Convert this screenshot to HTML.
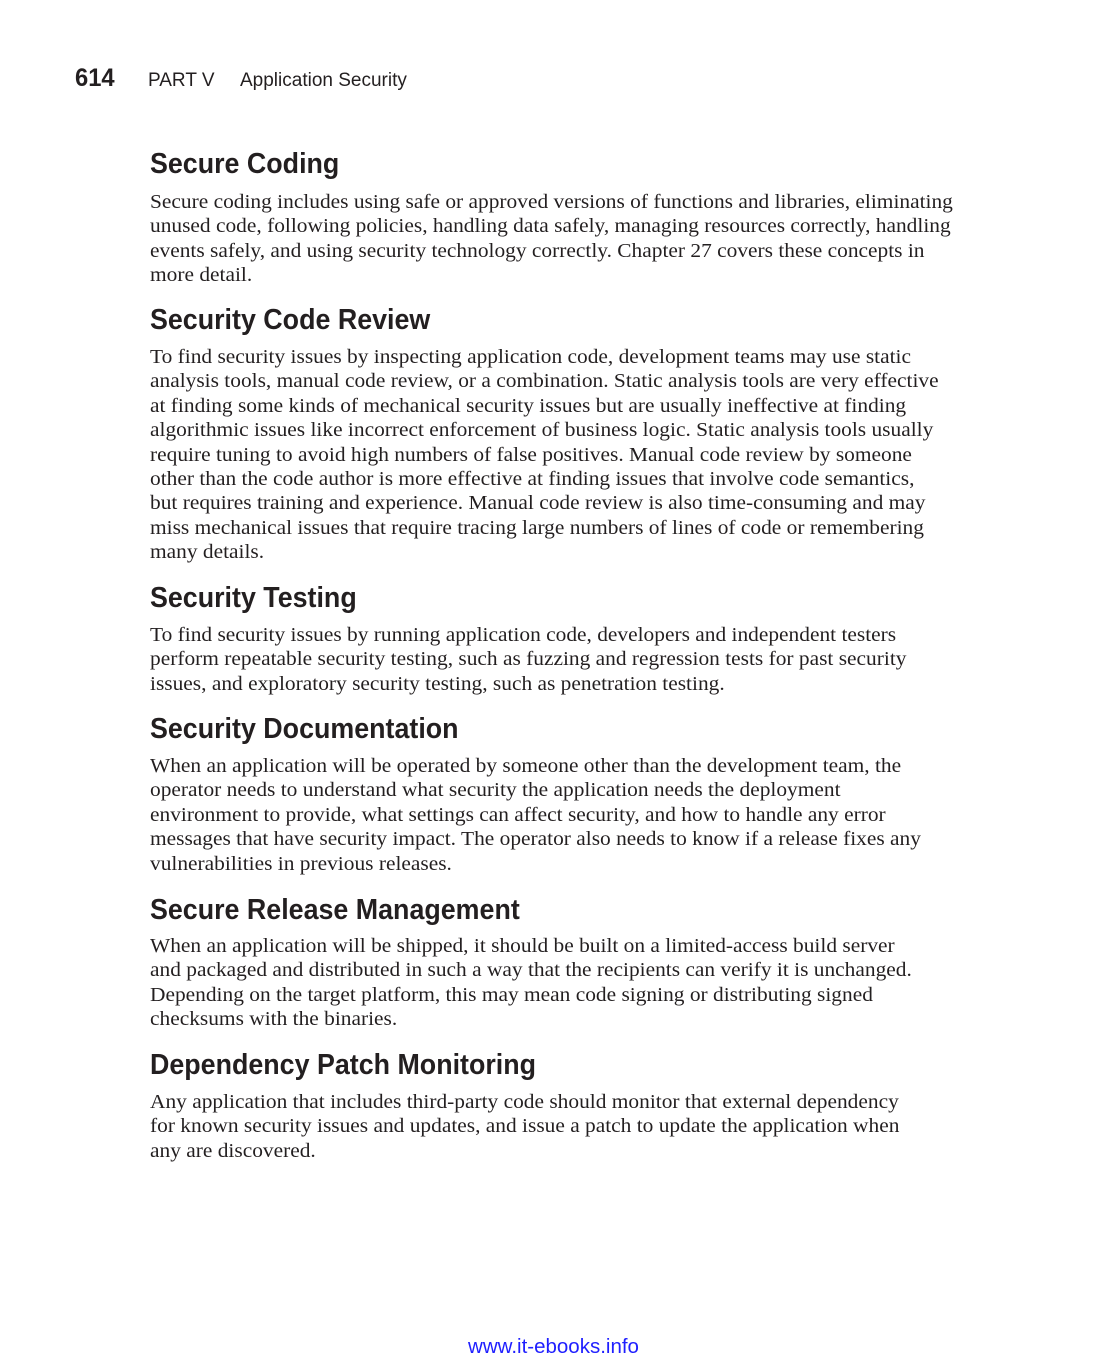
<!DOCTYPE html>
<html><head><meta charset="utf-8">
<style>
html,body{margin:0;padding:0;background:#fff;}
body{width:1107px;height:1369px;position:relative;overflow:hidden;color:#231f20;}
.hd{position:absolute;font-family:"Liberation Sans",sans-serif;font-weight:bold;font-size:29px;line-height:32px;white-space:nowrap;transform:scaleX(0.925);transform-origin:left center;}
.b{position:absolute;left:150px;font-family:"Liberation Serif",serif;font-size:20px;line-height:24.4px;white-space:nowrap;transform:scaleX(1.07);transform-origin:left top;}
.b div{height:24.4px;}
.top{position:absolute;top:66px;font-family:"Liberation Sans",sans-serif;white-space:nowrap;transform-origin:left center;}
.foot{position:absolute;top:1335px;left:0;width:1107px;text-align:center;font-family:"Liberation Sans",sans-serif;font-size:20.5px;color:#1f1fff;}
</style></head><body>
<div class="top" style="left:75px;font-size:25px;font-weight:bold;transform:scaleX(0.95);top:64px">614</div>
<div class="top" style="left:148px;font-size:19px;transform:scaleX(1.0);top:70px">PART V</div>
<div class="top" style="left:240px;font-size:19px;transform:scaleX(1.0);top:70px">Application Security</div>

<div class="hd" style="left:150px;top:148px">Secure Coding</div>
<div class="b" style="top:190px">
<div>Secure coding includes using safe or approved versions of functions and libraries, eliminating</div>
<div>unused code, following policies, handling data safely, managing resources correctly, handling</div>
<div>events safely, and using security technology correctly. Chapter 27 covers these concepts in</div>
<div>more detail.</div>
</div>

<div class="hd" style="left:150px;top:304px">Security Code Review</div>
<div class="b" style="top:345px">
<div>To find security issues by inspecting application code, development teams may use static</div>
<div>analysis tools, manual code review, or a combination. Static analysis tools are very effective</div>
<div>at finding some kinds of mechanical security issues but are usually ineffective at finding</div>
<div>algorithmic issues like incorrect enforcement of business logic. Static analysis tools usually</div>
<div>require tuning to avoid high numbers of false positives. Manual code review by someone</div>
<div>other than the code author is more effective at finding issues that involve code semantics,</div>
<div>but requires training and experience. Manual code review is also time-consuming and may</div>
<div>miss mechanical issues that require tracing large numbers of lines of code or remembering</div>
<div>many details.</div>
</div>

<div class="hd" style="left:150px;top:582px">Security Testing</div>
<div class="b" style="top:623px">
<div>To find security issues by running application code, developers and independent testers</div>
<div>perform repeatable security testing, such as fuzzing and regression tests for past security</div>
<div>issues, and exploratory security testing, such as penetration testing.</div>
</div>

<div class="hd" style="left:150px;top:713px">Security Documentation</div>
<div class="b" style="top:754px">
<div>When an application will be operated by someone other than the development team, the</div>
<div>operator needs to understand what security the application needs the deployment</div>
<div>environment to provide, what settings can affect security, and how to handle any error</div>
<div>messages that have security impact. The operator also needs to know if a release fixes any</div>
<div>vulnerabilities in previous releases.</div>
</div>

<div class="hd" style="left:150px;top:894px">Secure Release Management</div>
<div class="b" style="top:934px">
<div>When an application will be shipped, it should be built on a limited-access build server</div>
<div>and packaged and distributed in such a way that the recipients can verify it is unchanged.</div>
<div>Depending on the target platform, this may mean code signing or distributing signed</div>
<div>checksums with the binaries.</div>
</div>

<div class="hd" style="left:150px;top:1049px">Dependency Patch Monitoring</div>
<div class="b" style="top:1090px">
<div>Any application that includes third-party code should monitor that external dependency</div>
<div>for known security issues and updates, and issue a patch to update the application when</div>
<div>any are discovered.</div>
</div>

<div class="foot">www.it-ebooks.info</div>
</body></html>
